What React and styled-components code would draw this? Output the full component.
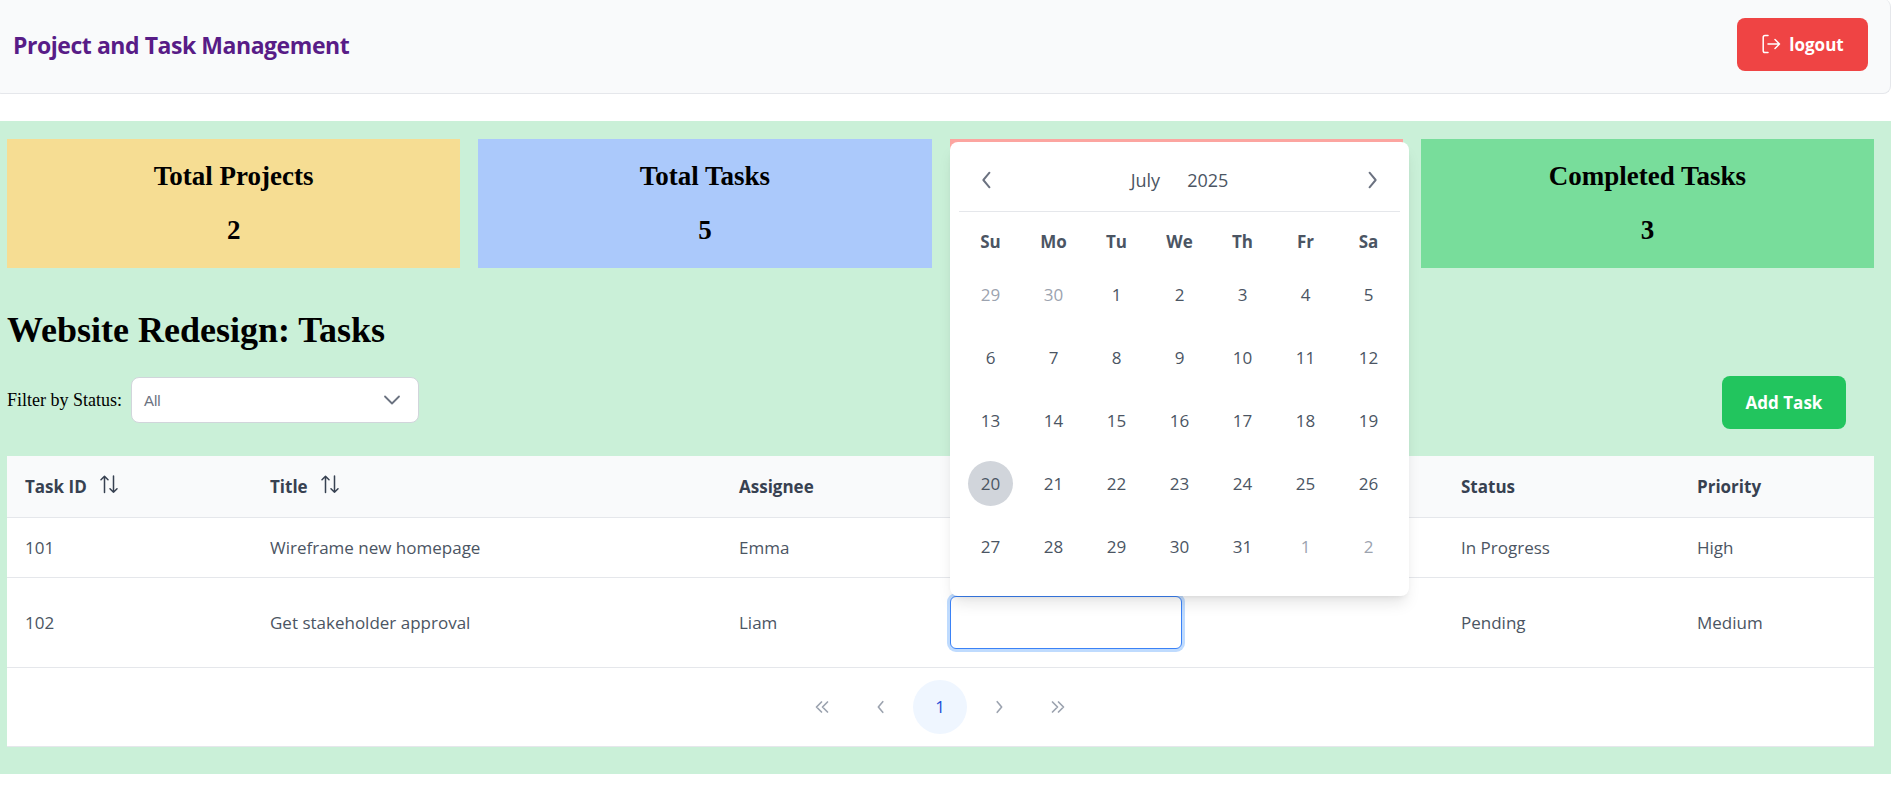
import React from "react";
import styled, { createGlobalStyle } from "styled-components";

const UI_FONT = `"Open Sans", "Noto Sans", sans-serif`;

const GlobalStyle = createGlobalStyle`
  html, body {
    margin: 0;
    padding: 0;
    background: #fff;
    font-family: "Liberation Serif", "Times New Roman", serif;
    color: #000;
  }
`;

// the third card sits under the open calendar, its text can't be seen
const stats = [
  { title: "Total Projects", value: 2, bg: "#f6dd93" },
  { title: "Total Tasks", value: 5, bg: "#abc9fb" },
  { title: "", value: "", bg: "#fca5a0" },
  { title: "Completed Tasks", value: 3, bg: "#78dd9b" },
];

const calendarDays = [
  [29, 30, 1, 2, 3, 4, 5],
  [6, 7, 8, 9, 10, 11, 12],
  [13, 14, 15, 16, 17, 18, 19],
  [20, 21, 22, 23, 24, 25, 26],
  [27, 28, 29, 30, 31, 1, 2],
];

function isMuted(row, day) {
  return (row === 0 && day > 20) || (row === 4 && day < 10);
}

function LogoutIcon() {
  return (
    <svg width="20" height="20" viewBox="0 0 20 20" fill="none" stroke="currentColor" strokeWidth="1.5" strokeLinecap="round" strokeLinejoin="round">
      <path d="M7 1.5H4C3 1.5 2.200 2.300 2.200 3.300v13.400c0 1 .8 1.800 1.800 1.800h3" />
      <path d="M7 10h11.500M14 5.500l4.500 4.500-4.500 4.500" />
    </svg>
  );
}

function SortIcon() {
  return (
    <svg width="18" height="19" viewBox="0 0 18 19" fill="none" stroke="currentColor" strokeWidth="1.500" strokeLinecap="round" strokeLinejoin="round">
      <path d="M4.500 17.500V1.200M1 4.700l3.500-3.500L8 4.700" />
      <path d="M13.500 1v16.300M10 13.800l3.500 3.500 3.500-3.500" />
    </svg>
  );
}

function Chevron({ dir = "right", size = 18, width = 1.6 }) {
  const d = dir === "left" ? "M11 3 6 9l5 6" : "M7 3l5 6-5 6";
  return (
    <svg width={size} height={size} viewBox="0 0 18 18" fill="none" stroke="currentColor" strokeWidth={width} strokeLinecap="round" strokeLinejoin="round">
      <path d={d} />
    </svg>
  );
}

function DoubleChevron({ dir = "right" }) {
  const d = dir === "left" ? "M7.500 3 2.500 8l5 5M13.500 3l-5 5 5 5" : "M2.500 3l5 5-5 5M8.500 3l5 5-5 5";
  return (
    <svg width="16" height="16" viewBox="0 0 16 16" fill="none" stroke="currentColor" strokeWidth="1.700" strokeLinecap="round" strokeLinejoin="round">
      <path d={d} />
    </svg>
  );
}

export default function App() {
  return (
    <>
      <GlobalStyle />
      <Header>
        <Brand>Project and Task Management</Brand>
        <LogoutButton>
          <LogoutIcon />
          logout
        </LogoutButton>
      </Header>
      <Main>
        <StatGrid>
          {stats.map((s) => (
            <StatCard key={s.bg} $bg={s.bg}>
              <StatTitle>{s.title}</StatTitle>
              <StatValue>{s.value}</StatValue>
            </StatCard>
          ))}
        </StatGrid>

        <PageTitle>Website Redesign: Tasks</PageTitle>

        <Toolbar>
          <FilterGroup>
            <FilterLabel>Filter by Status:</FilterLabel>
            <SelectBox>
              <span>All</span>
              <svg width="18" height="10" viewBox="0 0 18 10" fill="none" stroke="#6b7280" strokeWidth="1.800" strokeLinecap="round" strokeLinejoin="round">
                <path d="M2 1.500 9 8.500l7-7" />
              </svg>
            </SelectBox>
          </FilterGroup>
          <AddButton>Add Task</AddButton>
        </Toolbar>

        <TableCard>
          <TaskTable>
            <colgroup>
              <col style={{ width: 245 }} />
              <col style={{ width: 469 }} />
              <col style={{ width: 211 }} />
              <col style={{ width: 511 }} />
              <col style={{ width: 236 }} />
              <col style={{ width: 195 }} />
            </colgroup>
            <thead>
              <tr>
                <Th>
                  <ThInner>
                    Task ID
                    <SortIcon />
                  </ThInner>
                </Th>
                <Th>
                  <ThInner>
                    Title
                    <SortIcon />
                  </ThInner>
                </Th>
                <Th>Assignee</Th>
                <Th />
                <Th>Status</Th>
                <Th>Priority</Th>
              </tr>
            </thead>
            <tbody>
              <tr>
                <Td>101</Td>
                <Td>Wireframe new homepage</Td>
                <Td>Emma</Td>
                <Td />
                <Td>In Progress</Td>
                <Td>High</Td>
              </tr>
              <tr>
                <Td>102</Td>
                <Td>Get stakeholder approval</Td>
                <Td>Liam</Td>
                <Td>
                  <DateField>
                    <DateInput />
                    <CalendarPopup>
                      <CalendarHead>
                        <CalNav>
                          <Chevron dir="left" size={22} />
                        </CalNav>
                        <CalTitle>
                          <span>July</span>
                          <span>2025</span>
                        </CalTitle>
                        <CalNav>
                          <Chevron dir="right" size={22} />
                        </CalNav>
                      </CalendarHead>
                      <DayGrid>
                        {["Su", "Mo", "Tu", "We", "Th", "Fr", "Sa"].map((d) => (
                          <WeekDay key={d}>{d}</WeekDay>
                        ))}
                        {calendarDays.map((week, row) =>
                          week.map((day) => (
                            <DayCell key={`${row}-${day}`}>
                              <DayNumber $muted={isMuted(row, day)} $today={row === 3 && day === 20}>
                                {day}
                              </DayNumber>
                            </DayCell>
                          ))
                        )}
                      </DayGrid>
                    </CalendarPopup>
                  </DateField>
                </Td>
                <Td>Pending</Td>
                <Td>Medium</Td>
              </tr>
            </tbody>
          </TaskTable>
          <Pagination>
            <PageButton>
              <DoubleChevron dir="left" />
            </PageButton>
            <PageButton>
              <Chevron dir="left" size={16} width={1.8} />
            </PageButton>
            <PageButton $active>1</PageButton>
            <PageButton>
              <Chevron dir="right" size={16} width={1.8} />
            </PageButton>
            <PageButton>
              <DoubleChevron dir="right" />
            </PageButton>
          </Pagination>
        </TableCard>
      </Main>
    </>
  );
}

const Header = styled.header`
  box-sizing: border-box;
  width: 1897px;
  height: 95px;
  margin: -1px 0 0 -6px;
  padding: 0 22px 2px 18px;
  display: flex;
  align-items: center;
  justify-content: space-between;
  background: #f9fafb;
  border: 1px solid #e5e7eb;
  border-radius: 8px;
  border-width: 0 1px 1px 1px;
`;

const Brand = styled.h1`
  margin: 0;
  font-family: ${UI_FONT};
  font-size: 23px;
  font-weight: 700;
  letter-spacing: -0.45px;
  color: #581c87;
`;

const LogoutButton = styled.button`
  box-sizing: border-box;
  width: 131px;
  height: 53px;
  margin-bottom: 2px;
  display: flex;
  align-items: center;
  justify-content: center;
  gap: 8px;
  border: 0;
  border-radius: 8px;
  background: #ef4444;
  color: #fff;
  font-family: ${UI_FONT};
  font-size: 17px;
  font-weight: 700;
`;

const Main = styled.main`
  box-sizing: border-box;
  width: 1891px;
  height: 653px;
  margin-top: 27px;
  padding: 18px 17px 0 7px;
  background: #caf0d8;
`;

const StatGrid = styled.div`
  display: grid;
  grid-template-columns: repeat(4, 1fr);
  gap: 18px;
`;

const StatCard = styled.div`
  height: 129px;
  display: flex;
  flex-direction: column;
  align-items: center;
  padding-top: 20px;
  box-sizing: border-box;
  background: ${(p) => p.$bg};
`;

const StatTitle = styled.h3`
  margin: 0;
  font-size: 27px;
  line-height: 34px;
  font-weight: 700;
`;

const StatValue = styled.p`
  margin: 20px 0 0;
  font-size: 27px;
  line-height: 34px;
  font-weight: 700;
`;

const PageTitle = styled.h2`
  margin: 40px 0 0;
  font-size: 36px;
  line-height: 44px;
  font-weight: 700;
`;

const Toolbar = styled.div`
  display: flex;
  align-items: flex-start;
  height: 53px;
  margin-top: 24px;
  padding-right: 28px;
`;

const FilterGroup = styled.div`
  display: flex;
  align-items: center;
  margin-top: 1px;
`;

const FilterLabel = styled.label`
  font-size: 18px;
  margin-right: 9px;
`;

const SelectBox = styled.div`
  box-sizing: border-box;
  width: 288px;
  height: 46px;
  display: flex;
  align-items: center;
  justify-content: space-between;
  padding: 0 17px 0 12px;
  background: #fff;
  border: 1px solid #d1d5db;
  border-radius: 8px;
  font-family: "Liberation Sans", Arial, sans-serif;
  font-size: 15px;
  color: #6b7280;
`;

const AddButton = styled.button`
  box-sizing: border-box;
  width: 124px;
  height: 53px;
  margin-left: auto;
  border: 0;
  border-radius: 8px;
  background: #22c55e;
  color: #fff;
  font-family: ${UI_FONT};
  font-size: 17px;
  font-weight: 700;
`;

const TableCard = styled.div`
  margin-top: 27px;
  background: #fff;
  border-bottom: 1px solid #e5e7eb;
`;

const TaskTable = styled.table`
  width: 100%;
  table-layout: fixed;
  border-collapse: collapse;
  font-family: ${UI_FONT};
`;

const Th = styled.th`
  box-sizing: border-box;
  height: 61px;
  padding: 0 18px;
  text-align: left;
  font-size: 17px;
  font-weight: 700;
  color: #374151;
  background: #f9fafb;
  border-bottom: 1px solid #e5e7eb;
`;

const ThInner = styled.span`
  display: inline-flex;
  align-items: center;
  gap: 13px;

  svg {
    margin-top: -4px;
  }
`;

const Td = styled.td`
  box-sizing: border-box;
  height: 60px;
  padding: 18px;
  font-size: 17px;
  color: #4b5563;
  border-bottom: 1px solid #e5e7eb;
`;

const DateField = styled.div`
  position: relative;
  width: 232px;
`;

const DateInput = styled.input`
  display: block;
  box-sizing: border-box;
  width: 232px;
  height: 53px;
  background: #fff;
  border: 1px solid #3b82f6;
  border-radius: 6px;
  box-shadow: 0 0 0 3px #bfdbfe;
  outline: none;
`;

const CalendarPopup = styled.div`
  position: absolute;
  left: 0;
  bottom: 100%;
  box-sizing: border-box;
  width: 459px;
  height: 454px;
  padding: 0 9px 18px;
  background: #fff;
  border-radius: 8px;
  box-shadow: 0 10px 15px -3px rgba(0, 0, 0, 0.1), 0 4px 6px -4px rgba(0, 0, 0, 0.1);
`;

const CalendarHead = styled.div`
  box-sizing: border-box;
  height: 70px;
  display: flex;
  align-items: center;
  justify-content: space-between;
  padding: 8px 17px 0;
  border-bottom: 1px solid #e5e7eb;
`;

const CalNav = styled.span`
  display: flex;
  color: #6b7280;
`;

const CalTitle = styled.div`
  display: flex;
  gap: 27px;
  font-size: 18px;
  font-weight: 500;
  color: #4b5563;
`;

const DayGrid = styled.div`
  display: grid;
  grid-template-columns: repeat(7, 63px);
  grid-auto-rows: 63px;
  grid-template-rows: 51px;
`;

const WeekDay = styled.div`
  display: flex;
  align-items: flex-end;
  justify-content: center;
  padding-bottom: 10px;
  font-size: 17px;
  font-weight: 700;
  color: #4b5563;
  box-sizing: border-box;
`;

const DayCell = styled.div`
  display: flex;
  align-items: center;
  justify-content: center;
`;

const DayNumber = styled.span`
  width: 45px;
  height: 45px;
  display: flex;
  align-items: center;
  justify-content: center;
  border-radius: 50%;
  font-size: 17px;
  color: ${(p) => (p.$muted ? "#9ca3af" : "#4b5563")};
  background: ${(p) => (p.$today ? "#d1d5db" : "transparent")};
`;

const Pagination = styled.div`
  display: flex;
  justify-content: center;
  gap: 5px;
  padding: 12px 1px 12px 0;
  font-family: ${UI_FONT};
`;

const PageButton = styled.span`
  width: 54px;
  height: 54px;
  display: flex;
  align-items: center;
  justify-content: center;
  border-radius: 50%;
  font-size: 17px;
  color: ${(p) => (p.$active ? "#1d4ed8" : "#9ca3af")};
  background: ${(p) => (p.$active ? "#eff6ff" : "transparent")};
`;
